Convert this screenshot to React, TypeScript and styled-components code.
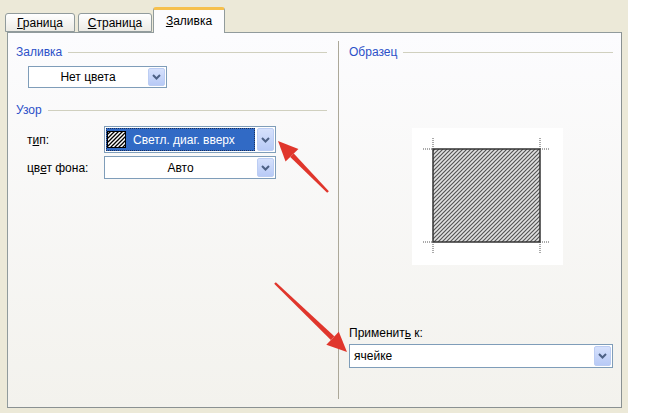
import React from 'react';
import styled, { createGlobalStyle } from 'styled-components';

const GlobalStyle = createGlobalStyle`
  body {
    margin: 0;
    background: #ffffff;
    font-family: "Liberation Sans", Arial, sans-serif;
    font-size: 12px;
    color: #000;
  }
`;

const Window = styled.div`
  position: relative;
  width: 628px;
  height: 413px;
  box-sizing: border-box;
  padding: 7px 6px 5px 7px;
  background: #ece9d8;
  display: flex;
  flex-direction: column;
`;

const TabRow = styled.div`
  display: flex;
  align-items: flex-end;
  height: 25px;
  margin-left: -2px;
  position: relative;
  z-index: 2;
`;

const Tab = styled.div<{ $w: number; $active?: boolean; $gap?: number }>`
  width: ${p => p.$w}px;
  margin-right: ${p => p.$gap ?? 0}px;
  box-sizing: border-box;
  height: ${p => (p.$active ? 26 : 19)}px;
  margin-bottom: ${p => (p.$active ? -1 : 0)}px;
  padding-top: ${p => (p.$active ? 4 : 2)}px;
  border: 1px solid #919b9c;
  border-bottom: ${p => (p.$active ? 'none' : '1px solid #919b9c')};
  border-top: ${p => (p.$active ? '3px solid #f6c04c' : '1px solid #919b9c')};
  border-radius: 3px 3px 0 0;
  background: ${p => (p.$active ? '#fcfcfe' : 'linear-gradient(#ffffff, #ecebe5)')};
  text-align: center;
  line-height: 14px;
`;

const U = styled.span`
  text-decoration: underline;
`;

const Panel = styled.div`
  height: 376px;
  box-sizing: border-box;
  border: 1px solid #919b9c;
  border-right-color: #8a9192;
  border-bottom-color: #8a9192;
  background: linear-gradient(#fcfcfe, #f3f2ed);
  display: flex;
`;

const LeftColumn = styled.div`
  width: 330px;
  box-sizing: border-box;
  padding: 12px 11px 0 8px;
  display: flex;
  flex-direction: column;
`;

const Divider = styled.div`
  width: 1px;
  background: #aca899;
  margin: 8px 0;
`;

const RightColumn = styled.div`
  flex: 1;
  box-sizing: border-box;
  padding: 12px 8px 39px 10px;
  display: flex;
  flex-direction: column;
`;

const GroupHeader = styled.div<{ $mt?: number }>`
  display: flex;
  align-items: center;
  gap: 6px;
  height: 14px;
  line-height: 14px;
  margin-top: ${p => p.$mt ?? 0}px;
  color: #2b50c8;
  &::after {
    content: '';
    flex: 1;
    height: 1px;
    background: #d0d0bf;
  }
`;

const Combo = styled.div<{ $w?: number; $h: number; $mt?: number; $ml?: number }>`
  display: flex;
  width: ${p => (p.$w ? `${p.$w}px` : 'auto')};
  height: ${p => p.$h}px;
  margin-top: ${p => p.$mt ?? 0}px;
  margin-left: ${p => p.$ml ?? 0}px;
  box-sizing: border-box;
  border: 1px solid #7f9db9;
  background: #ffffff;
  padding: 1px;
`;

const ComboValue = styled.div<{ $align: 'center' | 'left'; $selected?: boolean }>`
  flex: 1;
  display: flex;
  align-items: center;
  justify-content: ${p => (p.$align === 'center' ? 'center' : 'flex-start')};
  gap: 7px;
  padding: 0 ${p => (p.$selected ? 1 : 3)}px;
  background: ${p => (p.$selected ? '#316ac5' : 'transparent')};
  color: ${p => (p.$selected ? '#ffffff' : '#000000')};
  outline: ${p => (p.$selected ? '1px dotted #1b2f5a' : 'none')};
  outline-offset: -1px;
  white-space: nowrap;
`;

const DropButton = styled.div`
  width: 17px;
  flex: none;
  margin-left: 2px;
  box-sizing: border-box;
  border: 1px solid #bccdf3;
  border-radius: 2px;
  background: linear-gradient(#d6e1fc, #b8caf6);
  display: flex;
  align-items: center;
  justify-content: center;
`;

const Row = styled.div<{ $mt?: number }>`
  display: flex;
  align-items: center;
  margin-top: ${p => p.$mt ?? 0}px;
  padding-left: 11px;
`;

const RowLabel = styled.div`
  width: 77px;
  flex: none;
`;

const SampleBox = styled.div`
  align-self: flex-start;
  margin: 69px 0 0 63px;
  width: 151px;
  height: 137px;
  background: #ffffff;
`;

const ApplyLabel = styled.div`
  margin-top: auto;
  line-height: 14px;
`;

const ArrowLayer = styled.svg`
  position: absolute;
  left: 0;
  top: 0;
  pointer-events: none;
`;

const Chevron = () => (
  <svg width="9" height="6" viewBox="0 0 9 6">
    <polyline points="1,1 4.5,4.5 8,1" fill="none" stroke="#4d6185" strokeWidth="2" />
  </svg>
);

const Swatch = () => (
  <svg width="19" height="17" viewBox="0 0 19 17">
    <defs>
      <pattern id="sw" width="4" height="4" patternUnits="userSpaceOnUse">
        <path d="M-1,1 l2,-2 M0,4 l4,-4 M3,5 l2,-2" stroke="#000" strokeWidth="1.3" />
      </pattern>
    </defs>
    <rect x="0.5" y="0.5" width="18" height="16" fill="#fff" stroke="#000" />
    <rect x="1" y="1" width="17" height="15" fill="url(#sw)" />
  </svg>
);

const Sample = () => {
  const x0 = 21, y0 = 21, x1 = 128, y1 = 114;
  const tick = { stroke: '#555', strokeWidth: 1, strokeDasharray: '1 1' };
  return (
    <svg width="151" height="137" viewBox="0 0 151 137">
      <defs>
        <pattern id="hatch" width="4" height="4" patternUnits="userSpaceOnUse">
          <rect width="4" height="4" fill="#e2e2e2" />
          <path d="M-1,1 l2,-2 M0,4 l4,-4 M3,5 l2,-2" stroke="#555" strokeWidth="1.2" />
        </pattern>
      </defs>
      <rect x={x0} y={y0} width={x1 - x0} height={y1 - y0} fill="url(#hatch)" stroke="#333" strokeWidth="1.5" />
      <line x1={x0 - 10} y1={y0} x2={x0} y2={y0} {...tick} />
      <line x1={x0} y1={y0 - 11} x2={x0} y2={y0} {...tick} />
      <line x1={x1} y1={y0} x2={x1 + 10} y2={y0} {...tick} />
      <line x1={x1} y1={y0 - 11} x2={x1} y2={y0} {...tick} />
      <line x1={x0 - 10} y1={y1} x2={x0} y2={y1} {...tick} />
      <line x1={x0} y1={y1} x2={x0} y2={y1 + 11} {...tick} />
      <line x1={x1} y1={y1} x2={x1 + 10} y2={y1} {...tick} />
      <line x1={x1} y1={y1} x2={x1} y2={y1 + 11} {...tick} />
    </svg>
  );
};

const arrow = (tx: number, ty: number, hx: number, hy: number) => {
  const dx = hx - tx, dy = hy - ty;
  const len = Math.hypot(dx, dy);
  const ux = dx / len, uy = dy / len;
  const bx = hx - ux * 20, by = hy - uy * 20;
  const px = -uy, py = ux;
  const head = `${hx},${hy} ${bx + px * 9},${by + py * 9} ${bx - px * 9},${by - py * 9}`;
  const shaft = `${tx + px * 1.2},${ty + py * 1.2} ${bx + px * 2.5},${by + py * 2.5} ${bx - px * 2.5},${by - py * 2.5} ${tx - px * 1.2},${ty - py * 1.2}`;
  return (
    <g>
      <polygon points={shaft} fill="#e0362c" />
      <polygon points={head} fill="#e0362c" />
    </g>
  );
};

const App = () => (
  <>
    <GlobalStyle />
    <Window>
      <TabRow>
        <Tab $w={70} $gap={3}>
          <U>Г</U>раница
        </Tab>
        <Tab $w={74} $gap={1}>
          <U>С</U>траница
        </Tab>
        <Tab $w={72} $active>
          <U>З</U>аливка
        </Tab>
      </TabRow>
      <Panel>
        <LeftColumn>
          <GroupHeader>Заливка</GroupHeader>
          <Combo $w={139} $h={22} $mt={7} $ml={12}>
            <ComboValue $align="center">Нет цвета</ComboValue>
            <DropButton>
              <Chevron />
            </DropButton>
          </Combo>
          <GroupHeader $mt={15}>Узор</GroupHeader>
          <Row $mt={9}>
            <RowLabel>
              т<U>и</U>п:
            </RowLabel>
            <Combo $w={172} $h={27}>
              <ComboValue $align="left" $selected>
                <Swatch />
                Светл. диаг. вверх
              </ComboValue>
              <DropButton>
                <Chevron />
              </DropButton>
            </Combo>
          </Row>
          <Row $mt={3}>
            <RowLabel>
              цв<U>е</U>т фона:
            </RowLabel>
            <Combo $w={172} $h={23}>
              <ComboValue $align="center">Авто</ComboValue>
              <DropButton>
                <Chevron />
              </DropButton>
            </Combo>
          </Row>
        </LeftColumn>
        <Divider />
        <RightColumn>
          <GroupHeader>Образец</GroupHeader>
          <SampleBox>
            <Sample />
          </SampleBox>
          <ApplyLabel>
            Применит<U>ь</U> к:
          </ApplyLabel>
          <Combo $h={24} $mt={4}>
            <ComboValue $align="left">ячейке</ComboValue>
            <DropButton>
              <Chevron />
            </DropButton>
          </Combo>
        </RightColumn>
      </Panel>
      <ArrowLayer width="628" height="413" viewBox="0 0 628 413">
        {arrow(328, 192, 278, 141)}
        {arrow(275, 283, 347, 352)}
      </ArrowLayer>
    </Window>
  </>
);

export default App;
